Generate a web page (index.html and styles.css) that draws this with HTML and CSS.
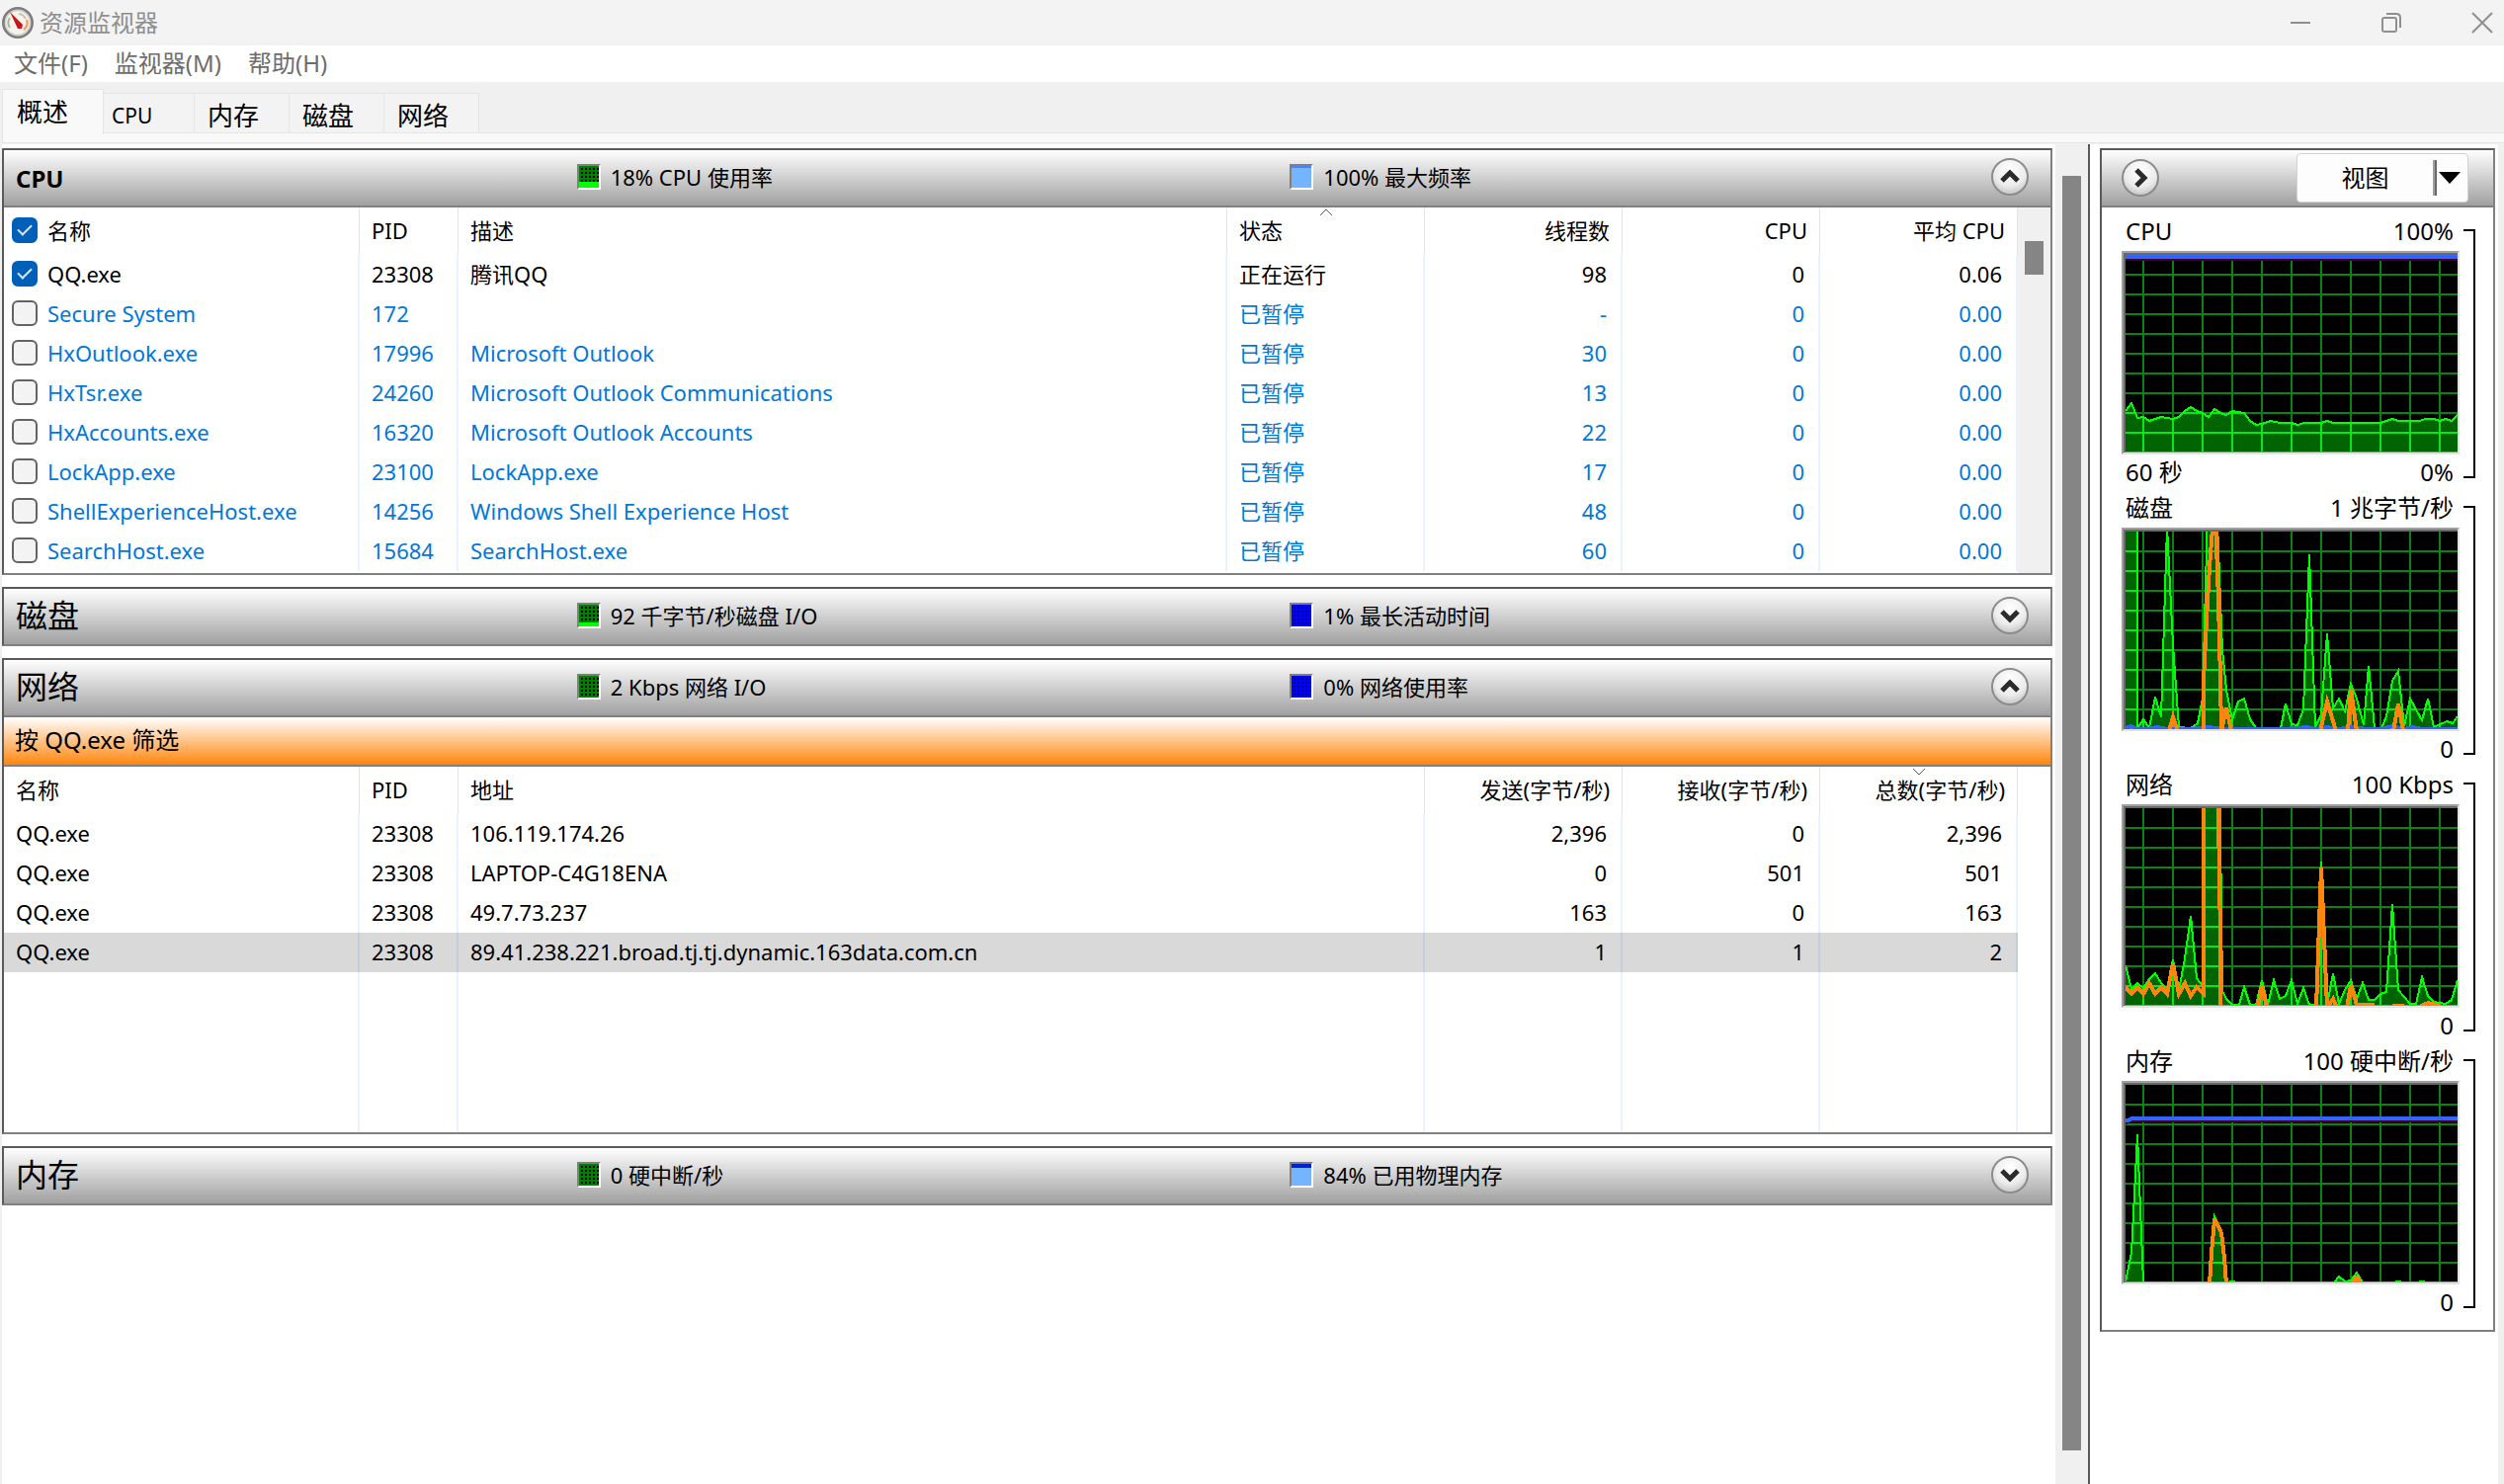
FILE: index.html
```html
<!DOCTYPE html>
<html lang="zh-CN">
<head>
<meta charset="utf-8">
<title>资源监视器</title>
<link rel="stylesheet" href="styles.css">
</head>
<body>
<svg class="defs" width="0" height="0" aria-hidden="true">
  <defs>
    <path id="grid" fill="none" stroke-width="2" d="M18 0V200M48 0V200M78 0V200M108 0V200M138 0V200M168 0V200M198 0V200M228 0V200M258 0V200M288 0V200M318 0V200M0 20H336M0 40H336M0 60H336M0 80H336M0 100H336M0 120H336M0 140H336M0 160H336M0 180H336M0 200H336"/>
    <radialGradient id="knob" cx="50%" cy="30%" r="75%">
      <stop offset="0" stop-color="#ffffff"/><stop offset="0.6" stop-color="#ececec"/><stop offset="1" stop-color="#bdbdbd"/>
    </radialGradient>
  </defs>
</svg>

<header class="titlebar">
  <svg class="app-icon" viewBox="0 0 32 32" aria-hidden="true">
    <circle cx="16" cy="16" r="14.5" fill="#f6f3ea" stroke="#7d7d7d" stroke-width="3"/>
    <circle cx="16" cy="16" r="12.6" fill="none" stroke="#d0d0d0" stroke-width="1.6"/>
    <path d="M8 21A9 9 0 0 1 8 11" fill="none" stroke="#a9b79c" stroke-width="2"/>
    <path d="M17 7A9 9 0 0 1 24 12" fill="none" stroke="#c9c3ae" stroke-width="2"/>
    <path d="M25 13A9 9 0 0 1 22 23" fill="none" stroke="#f0a070" stroke-width="2.4"/>
    <path d="M8 5L21 18L20 22L16 22Z" fill="#c8141c"/>
  </svg>
  <h1 class="app-title">资源监视器</h1>
  <div class="window-buttons">
    <button type="button" aria-label="最小化"><svg viewBox="0 0 20 20"><path d="M0 10H20"/></svg></button>
    <button type="button" aria-label="还原"><svg viewBox="0 0 20 20"><rect x="1" y="5" width="14" height="14" rx="2"/><path d="M5 1H15Q19 1 19 5V15"/></svg></button>
    <button type="button" aria-label="关闭"><svg viewBox="0 0 20 20"><path d="M0 0L20 20M20 0L0 20"/></svg></button>
  </div>
</header>

<nav class="menubar">
  <button type="button">文件(F)</button>
  <button type="button">监视器(M)</button>
  <button type="button">帮助(H)</button>
</nav>

<div class="tabs" role="tablist">
  <button type="button" role="tab" class="tab tab-active" aria-selected="true">概述</button>
  <button type="button" role="tab" class="tab tab-latin">CPU</button>
  <button type="button" role="tab" class="tab">内存</button>
  <button type="button" role="tab" class="tab">磁盘</button>
  <button type="button" role="tab" class="tab">网络</button>
</div>
<div class="tab-edge"></div>

<div class="workspace">
  <main class="panels">
    <section class="panel">
      <header class="panel-head">
        <h2 class="panel-title title-latin">CPU</h2>
        <div class="stat"><span class="meter meter-green"><i style="height:6px"></i></span>18% CPU 使用率</div>
        <div class="stat"><span class="meter meter-sky"><i style="height:20px"></i></span>100% 最大频率</div>
        <button type="button" class="knob" aria-label="折叠"><svg viewBox="0 0 38 38"><circle cx="19" cy="19" r="18"/><path d="M11 23L19 15L27 23"/></svg></button>
      </header>
      <div class="list">
        <table class="grid">
          <colgroup><col class="c-name"><col class="c-pid"><col><col class="c-num"><col class="c-num"><col class="c-num"><col class="c-num"></colgroup>
          <thead>
            <tr><th><label class="pick"><input type="checkbox" checked>名称</label></th><th>PID</th><th>描述</th><th class="sorted">状态<svg class="sort" viewBox="0 0 14 8"><path d="M1 7L7 1L13 7"/></svg></th><th class="num">线程数</th><th class="num">CPU</th><th class="num">平均 CPU</th></tr>
          </thead>
          <tbody>
            <tr><td><label class="pick"><input type="checkbox" checked>QQ.exe</label></td><td>23308</td><td>腾讯QQ</td><td>正在运行</td><td class="num">98</td><td class="num">0</td><td class="num">0.06</td></tr>
            <tr class="paused"><td><label class="pick"><input type="checkbox">Secure System</label></td><td>172</td><td></td><td>已暂停</td><td class="num">-</td><td class="num">0</td><td class="num">0.00</td></tr>
            <tr class="paused"><td><label class="pick"><input type="checkbox">HxOutlook.exe</label></td><td>17996</td><td>Microsoft Outlook</td><td>已暂停</td><td class="num">30</td><td class="num">0</td><td class="num">0.00</td></tr>
            <tr class="paused"><td><label class="pick"><input type="checkbox">HxTsr.exe</label></td><td>24260</td><td>Microsoft Outlook Communications</td><td>已暂停</td><td class="num">13</td><td class="num">0</td><td class="num">0.00</td></tr>
            <tr class="paused"><td><label class="pick"><input type="checkbox">HxAccounts.exe</label></td><td>16320</td><td>Microsoft Outlook Accounts</td><td>已暂停</td><td class="num">22</td><td class="num">0</td><td class="num">0.00</td></tr>
            <tr class="paused"><td><label class="pick"><input type="checkbox">LockApp.exe</label></td><td>23100</td><td>LockApp.exe</td><td>已暂停</td><td class="num">17</td><td class="num">0</td><td class="num">0.00</td></tr>
            <tr class="paused"><td><label class="pick"><input type="checkbox">ShellExperienceHost.exe</label></td><td>14256</td><td>Windows Shell Experience Host</td><td>已暂停</td><td class="num">48</td><td class="num">0</td><td class="num">0.00</td></tr>
            <tr class="paused"><td><label class="pick"><input type="checkbox">SearchHost.exe</label></td><td>15684</td><td>SearchHost.exe</td><td>已暂停</td><td class="num">60</td><td class="num">0</td><td class="num">0.00</td></tr>
          </tbody>
        </table>
        <div class="list-scroll"><div class="thumb"></div></div>
      </div>
    </section>

    <section class="panel">
      <header class="panel-head">
        <h2 class="panel-title">磁盘</h2>
        <div class="stat"><span class="meter meter-green"><i style="height:4px"></i></span>92 千字节/秒磁盘 I/O</div>
        <div class="stat"><span class="meter meter-blue"></span>1% 最长活动时间</div>
        <button type="button" class="knob" aria-label="展开"><svg viewBox="0 0 38 38"><circle cx="19" cy="19" r="18"/><path d="M11 15L19 23L27 15"/></svg></button>
      </header>
    </section>

    <section class="panel">
      <header class="panel-head">
        <h2 class="panel-title">网络</h2>
        <div class="stat"><span class="meter meter-green"></span>2 Kbps 网络 I/O</div>
        <div class="stat"><span class="meter meter-blue"></span>0% 网络使用率</div>
        <button type="button" class="knob" aria-label="折叠"><svg viewBox="0 0 38 38"><circle cx="19" cy="19" r="18"/><path d="M11 23L19 15L27 23"/></svg></button>
      </header>
      <div class="filter">按 QQ.exe 筛选</div>
      <div class="list list-plain">
        <table class="grid">
          <colgroup><col class="c-name"><col class="c-pid"><col><col class="c-num"><col class="c-num"><col class="c-num"></colgroup>
          <thead>
            <tr><th>名称</th><th>PID</th><th>地址</th><th class="num">发送(字节/秒)</th><th class="num">接收(字节/秒)</th><th class="num sorted">总数(字节/秒)<svg class="sort" viewBox="0 0 14 8"><path d="M1 1L7 7L13 1"/></svg></th></tr>
          </thead>
          <tbody>
            <tr><td>QQ.exe</td><td>23308</td><td>106.119.174.26</td><td class="num">2,396</td><td class="num">0</td><td class="num">2,396</td></tr>
            <tr><td>QQ.exe</td><td>23308</td><td>LAPTOP-C4G18ENA</td><td class="num">0</td><td class="num">501</td><td class="num">501</td></tr>
            <tr><td>QQ.exe</td><td>23308</td><td>49.7.73.237</td><td class="num">163</td><td class="num">0</td><td class="num">163</td></tr>
            <tr class="selected"><td>QQ.exe</td><td>23308</td><td>89.41.238.221.broad.tj.tj.dynamic.163data.com.cn</td><td class="num">1</td><td class="num">1</td><td class="num">2</td></tr>
            <tr class="rest"><td></td><td></td><td></td><td></td><td></td><td></td></tr>
          </tbody>
        </table>
      </div>
    </section>

    <section class="panel">
      <header class="panel-head">
        <h2 class="panel-title">内存</h2>
        <div class="stat"><span class="meter meter-green"></span>0 硬中断/秒</div>
        <div class="stat"><span class="meter meter-sky meter-memory"><i style="height:18px"></i></span>84% 已用物理内存</div>
        <button type="button" class="knob" aria-label="展开"><svg viewBox="0 0 38 38"><circle cx="19" cy="19" r="18"/><path d="M11 15L19 23L27 15"/></svg></button>
      </header>
    </section>
  </main>

  <div class="main-scroll"><div class="thumb"></div></div>

  <aside class="sidebar">
    <section class="graphs">
      <header class="graphs-head">
        <button type="button" class="knob" aria-label="隐藏图表"><svg viewBox="0 0 38 38"><circle cx="19" cy="19" r="18"/><path d="M15 11L23 19L15 27"/></svg></button>
        <button type="button" class="view-button"><span class="view-text">视图</span><span class="view-line"></span><svg viewBox="0 0 22 12"><path d="M0 0H22L11 12Z"/></svg></button>
      </header>

      <figure class="graph">
        <figcaption class="graph-top"><span>CPU</span><span>100%</span></figcaption>
        <svg class="plot" viewBox="0 0 336 200">
          <defs><clipPath id="area-cpu"><polygon points="0,200 0,158 6,150 12,165 18,164 24,168 36,164 42,165 48,166 54,164 60,158 66,154 72,158 78,160 84,164 90,156 96,160 102,162 108,158 120,160 126,168 132,172 138,171 147,168 156,170 168,170 174,172 181,170 198,170 204,168 210,170 258,170 270,166 276,168 297,168 304,166 312,166 318,168 324,166 330,168 336,162 336,200"/></clipPath></defs>
          <use href="#grid" class="lines"/>
          <g clip-path="url(#area-cpu)"><rect class="area" width="336" height="200"/><use href="#grid" class="lines-lit"/></g>
          <polyline class="green" points="0,158 6,150 12,165 18,164 24,168 36,164 42,165 48,166 54,164 60,158 66,154 72,158 78,160 84,164 90,156 96,160 102,162 108,158 120,160 126,168 132,172 138,171 147,168 156,170 168,170 174,172 181,170 198,170 204,168 210,170 258,170 270,166 276,168 297,168 304,166 312,166 318,168 324,166 330,168 336,162"/>
          <path class="shade" d="M0 5H336"/><path class="blue" d="M0 2H336"/>
        </svg>
        <div class="graph-bottom"><span>60 秒</span><span>0%</span></div>
        <div class="bracket"></div>
      </figure>

      <figure class="graph">
        <figcaption class="graph-top"><span>磁盘</span><span>1 兆字节/秒</span></figcaption>
        <svg class="plot" viewBox="0 0 336 200">
          <defs><clipPath id="area-disk"><polygon points="0,200 0,-20 12,-20 12,199 18,190 24,199 30,167 36,188 42,-5 48,115 54,198 66,199 73,194 78,169 84,-60 91,-60 96,70 98,120 102,160 108,190 114,172 120,169 126,190 132,199 157,199 162,174 168,195 174,196 180,180 186,23 192,198 198,185 204,103 210,179 216,169 222,182 228,154 234,169 241,196 246,136 252,199 259,199 264,187 270,151 276,141 282,197 288,169 300,191 306,169 312,198 325,192 331,194 336,187 336,200"/></clipPath></defs>
          <use href="#grid" class="lines"/>
          <g clip-path="url(#area-disk)"><rect class="area" width="336" height="200"/><use href="#grid" class="lines-lit"/></g>
          <polyline class="green" points="12,-20 12,199 18,190 24,199 30,167 36,188 42,-5 48,115 54,198 66,199 73,194 78,169 84,-60 91,-60 96,70 98,120 102,160 108,190 114,172 120,169 126,190 132,199 157,199 162,174 168,195 174,196 180,180 186,23 192,198 198,185 204,103 210,179 216,169 222,182 228,154 234,169 241,196 246,136 252,199 259,199 264,187 270,151 276,141 282,197 288,169 300,191 306,169 312,198 325,192 331,194 336,187"/>
          <polyline class="blue" points="0,199 6,197 12,200 22,200 32,198 42,200 66,200 84,198 100,200 160,200 184,198 192,200 204,198 216,200 228,198 236,199 246,200 258,200 270,197 282,200 290,198 300,200 336,200"/>
          <path class="orange" d="M44 202L48 188L53 202M79 202V150L82 90L85 35L89 -15H91L94 70L96 150L97 202L102 178L107 202M197 202L204 172L213 202M225 202L228 160L234 202M271 202L276 174L281 202"/>
        </svg>
        <div class="graph-bottom"><span></span><span>0</span></div>
        <div class="bracket"></div>
      </figure>

      <figure class="graph">
        <figcaption class="graph-top"><span>网络</span><span>100 Kbps</span></figcaption>
        <svg class="plot" viewBox="0 0 336 200">
          <defs><clipPath id="area-net"><polygon points="0,200 0,159 6,183 12,177 18,182 24,173 30,167 36,177 42,183 48,153 54,184 60,152 66,109 72,172 78,180 79,-40 95,-40 97,100 98,185 102,193 108,199 115,199 120,181 126,199 132,199 138,174 144,199 150,174 156,193 162,190 168,174 174,198 180,182 186,199 192,199 198,54 204,199 210,167 216,198 222,184 228,174 234,193 240,177 246,194 252,194 258,188 264,186 270,97 276,184 288,198 294,198 300,171 306,190 312,196 324,198 330,194 336,174 336,200"/></clipPath></defs>
          <use href="#grid" class="lines"/>
          <g clip-path="url(#area-net)"><rect class="area" width="336" height="200"/><use href="#grid" class="lines-lit"/></g>
          <polyline class="green" points="0,159 6,183 12,177 18,182 24,173 30,167 36,177 42,183 48,153 54,184 60,152 66,109 72,172 78,180 79,-40 95,-40 97,100 98,185 102,193 108,199 115,199 120,181 126,199 132,199 138,174 144,199 150,174 156,193 162,190 168,174 174,198 180,182 186,199 192,199 198,54 204,199 210,167 216,198 222,184 228,174 234,193 240,177 246,194 252,194 258,188 264,186 270,97 276,184 288,198 294,198 300,171 306,190 312,196 324,198 330,194 336,174"/>
          <path class="orange" d="M0 181L6 188L12 181L18 188L24 177L30 188L36 181L42 188L48 157L54 188L60 177L66 190L72 181L79 188V-20M94 -20L95 100L96 105V202M134 202L138 179L143 202M193 202L198 60L204 202L210 193L214 202M224 202L228 179L234 199H252M270 200H282M298 201L306 197L314 199L320 201"/>
        </svg>
        <div class="graph-bottom"><span></span><span>0</span></div>
        <div class="bracket"></div>
      </figure>

      <figure class="graph">
        <figcaption class="graph-top"><span>内存</span><span>100 硬中断/秒</span></figcaption>
        <svg class="plot" viewBox="0 0 336 200">
          <defs><clipPath id="area-mem"><polygon points="0,200 6,170 12,50 18,200 84,200 90,132 96,145 102,200 210,200 216,193 222,199 228,197 234,189 240,200"/></clipPath></defs>
          <use href="#grid" class="lines"/>
          <g clip-path="url(#area-mem)"><rect class="area" width="336" height="200"/><use href="#grid" class="lines-lit"/></g>
          <polyline class="green" points="0,199 6,170 12,50 18,200 84,200 90,133 96,146 102,200 108,199 114,200 211,200 216,194 222,199 228,198 234,190 240,200 270,200 276,199 282,200 294,200 300,199 306,200 336,200"/>
          <path class="orange" d="M85 202L87 170L90 137H91L97 150L100 175L102 202M214 201H218M230 202L233 195H235L238 202"/>
          <path class="shade" d="M0 39L6 37H336"/><path class="blue" d="M0 36H3L6 34H336"/>
        </svg>
        <div class="graph-bottom"><span></span><span>0</span></div>
        <div class="bracket"></div>
      </figure>
    </section>
  </aside>
</div>
</body>
</html>
```

FILE: styles.css
```css
* { box-sizing: border-box; }

body {
  margin: 0;
  min-height: 100vh;
  display: flex;
  flex-direction: column;
  background: #f0f0f0;
  color: #000;
  font-family: "Noto Sans", "Noto Sans CJK SC", sans-serif;
  font-size: 22px;
  line-height: 30px;
}

h1, h2, figure { margin: 0; font-weight: normal; }

button {
  padding: 0;
  border: 0;
  background: none;
  color: inherit;
  font: inherit;
}

.defs { position: absolute; }

/* Title bar and menu */
.titlebar {
  display: flex;
  align-items: center;
  height: 46px;
  padding-left: 2px;
  background: #f3f3f3;
  color: #8f8f8f;
}
.app-icon { width: 32px; height: 32px; margin-right: 6px; }
.app-title { font-size: 24px; }
.window-buttons { display: flex; gap: 48px; margin-left: auto; }
.window-buttons button { width: 44px; height: 46px; display: grid; place-items: center; }
.window-buttons svg {
  width: 20px;
  height: 20px;
  overflow: visible;
  fill: none;
  stroke: #8f8f8f;
  stroke-width: 2;
}

.menubar {
  display: flex;
  align-items: center;
  gap: 27px;
  height: 37px;
  padding: 0 14px 2px;
  background: #fff;
  color: #6d6d6d;
  font-size: 24px;
}

/* Tabs */
.tabs {
  display: flex;
  align-items: flex-end;
  height: 51px;
  padding-left: 2px;
}
.tab {
  width: 96px;
  height: 40px;
  padding: 6px 0 2px 13px;
  border: 1px solid #e5e5e5;
  border-left: 0;
  border-bottom: 0;
  background: #f3f3f3;
  font-size: 26px;
  text-align: left;
}
.tab-latin { width: 92px; padding-left: 8px; font-size: 21px; }
.tab-active {
  position: relative;
  z-index: 1;
  width: 103px;
  height: 46px;
  margin-bottom: -2px;
  padding: 4px 0 6px 14px;
  border-left: 1px solid #e5e5e5;
  background: #f9f9f9;
}
.tab-edge {
  height: 11px;
  margin-left: 2px;
  border: 1px solid #e5e5e5;
  border-right: 0;
  background: #f9f9f9;
}

/* Work area */
.workspace { flex: 1; display: flex; padding: 1px 6px 0 2px; }
.panels {
  flex: 1;
  display: flex;
  flex-direction: column;
  gap: 12px;
  padding: 4px 3px 12px 0;
  background: #fff;
}
.panel, .graphs {
  border: 2px solid #808080;
  border-top-color: #5a5a5a;
  border-left-color: #5a5a5a;
}
.panel-head, .graphs-head {
  height: 56px;
  background: linear-gradient(#fff, #a0a0a0);
}
.panel-head {
  display: grid;
  grid-template-columns: 568fr 722fr 710fr 38px;
  align-items: center;
  padding: 0 22px 2px 12px;
}
.panel-title { font-size: 32px; line-height: 40px; }
.title-latin { padding-top: 4px; font-size: 24px; font-weight: bold; }
.stat { display: flex; align-items: center; gap: 10px; }
.list, .filter { border-top: 2px solid #808080; }

.meter {
  width: 24px;
  height: 26px;
  display: flex;
  align-items: flex-end;
  border: 2px solid #fff;
  border-top-color: #808080;
  border-left-color: #808080;
}
.meter i { flex: 1; }
.meter-green {
  background:
    repeating-linear-gradient(90deg, #008000 0 2px, transparent 2px 4px),
    repeating-linear-gradient(#008000 0 2px, #000 2px 4px);
}
.meter-green i { background: #00ff00; }
.meter-blue {
  background:
    repeating-linear-gradient(90deg, #0000ff 0 2px, transparent 2px 4px),
    repeating-linear-gradient(#0000ff 0 2px, #000080 2px 4px);
}
.meter-sky { background: #4f80ff; }
.meter-sky i { background: #75b5ff; }
.meter-memory { background: #0020d0; }

.knob { width: 38px; height: 38px; }
.knob svg { display: block; width: 38px; height: 38px; }
.knob circle { fill: url(#knob); stroke: #8c8c8c; stroke-width: 2; }
.knob path { fill: none; stroke: #2b2b2b; stroke-width: 5; }

.filter {
  height: 50px;
  padding: 8px 11px 0;
  background: linear-gradient(#fff, #ff860d);
  font-size: 24px;
}

/* Lists */
.list { display: flex; }
.list-plain { padding-right: 33px; }
.grid {
  flex: 1;
  width: 100%;
  table-layout: fixed;
  border-collapse: separate;
  border-spacing: 0;
}
.c-name { width: 360px; }
.c-pid { width: 100px; }
.c-num { width: 200px; }
.grid th, .grid td {
  height: 40px;
  padding: 0 12px 2px;
  border-right: 2px solid #eaf2ff;
  font-weight: normal;
  text-align: left;
  white-space: nowrap;
}
.grid th { height: 48px; border-right: 1px solid #e5e5e5; }
.grid .num { text-align: right; }
.grid td.num { padding-right: 14px; }
.grid .paused { color: #0078d7; }
.grid .selected td { background: #d9d9d9; border-color: #c3cedc; }
.grid .rest td { height: 162px; }
.list:not(.list-plain) tbody::after { content: ""; display: block; height: 2px; }
.sorted { position: relative; }
.sort {
  position: absolute;
  top: 1px;
  left: 50%;
  width: 14px;
  height: 8px;
  margin-left: -7px;
  fill: none;
  stroke: #5a5a5a;
}

.pick { display: flex; align-items: center; gap: 10px; margin-left: -4px; }
.pick input {
  appearance: none;
  width: 26px;
  height: 26px;
  margin: 0;
  display: grid;
  place-items: center;
  border: 2px solid #636363;
  border-radius: 6px;
  background: #f3f3f3;
}
.pick input:checked { border-color: #005fb8; background: #005fb8; }
.pick input:checked::after {
  content: "";
  width: 12px;
  height: 6px;
  margin-bottom: 4px;
  border: solid #d6e6f5;
  border-width: 0 0 2px 2px;
  transform: rotate(-45deg);
}

/* Scroll bars */
.list-scroll { width: 33px; padding: 34px 7px 0; background: #f0f0f0; }
.list-scroll .thumb { height: 34px; }
.thumb { background: #858585; }
.main-scroll { width: 33px; display: flex; padding: 32px 7px 34px; background: #f0f0f0; }
.main-scroll .thumb { flex: 1; }

/* Graph column */
.sidebar {
  padding: 4px 3px 0 10px;
  border-left: 2px solid #5a5a5a;
  background: #fff;
}
.graphs { width: 400px; padding-bottom: 16px; }
.graphs-head {
  display: flex;
  align-items: center;
  justify-content: space-between;
  height: 58px;
  padding: 0 25px 1px 20px;
  border-bottom: 2px solid #808080;
}
.view-button {
  display: flex;
  align-items: center;
  width: 174px;
  height: 50px;
  padding-right: 7px;
  border: 1px solid #d2d2d2;
  border-radius: 4px;
  background: #fdfdfd;
  font-size: 24px;
}
.view-text { flex: 1; }
.view-line {
  width: 4px;
  height: 36px;
  margin-right: 2px;
  border-left: 2px solid #a0a0a0;
  border-right: 2px solid #696969;
}
.view-button svg { width: 22px; height: 12px; }

.graph {
  display: grid;
  grid-template: 44px 206px 30px / 342px 12px;
  column-gap: 4px;
  padding-left: 20px;
  font-size: 24px;
}
.graph-top, .graph-bottom {
  display: flex;
  justify-content: space-between;
  align-items: center;
  grid-column: 1;
  padding: 4px 6px 0 4px;
}
.graph-bottom { padding-top: 6px; }
.plot {
  grid-column: 1;
  width: 342px;
  height: 206px;
  border: 2px solid #a0a0a0;
  border-right-color: #e3e3e3;
  border-bottom-color: #e3e3e3;
  padding: 2px 0 0 2px;
  background: linear-gradient(#000, #000) content-box, #696969;
  shape-rendering: crispEdges;
}
.lines { stroke: #0a8214; }
.lines-lit { stroke: #0ae61e; }
.area { fill: #006400; }
.plot polyline, .plot path { fill: none; }
.plot .green { stroke: #00ff00; stroke-width: 2; }
.plot .blue { stroke: #3264ff; stroke-width: 4; }
.plot .orange { stroke: #ff860d; stroke-width: 4; }
.plot .shade { stroke: #400040; stroke-width: 2; }
.bracket {
  grid-column: 2;
  grid-row: 1 / 4;
  margin: 22px 0 6px;
  border: 2px solid #000;
  border-left: 0;
}
```
